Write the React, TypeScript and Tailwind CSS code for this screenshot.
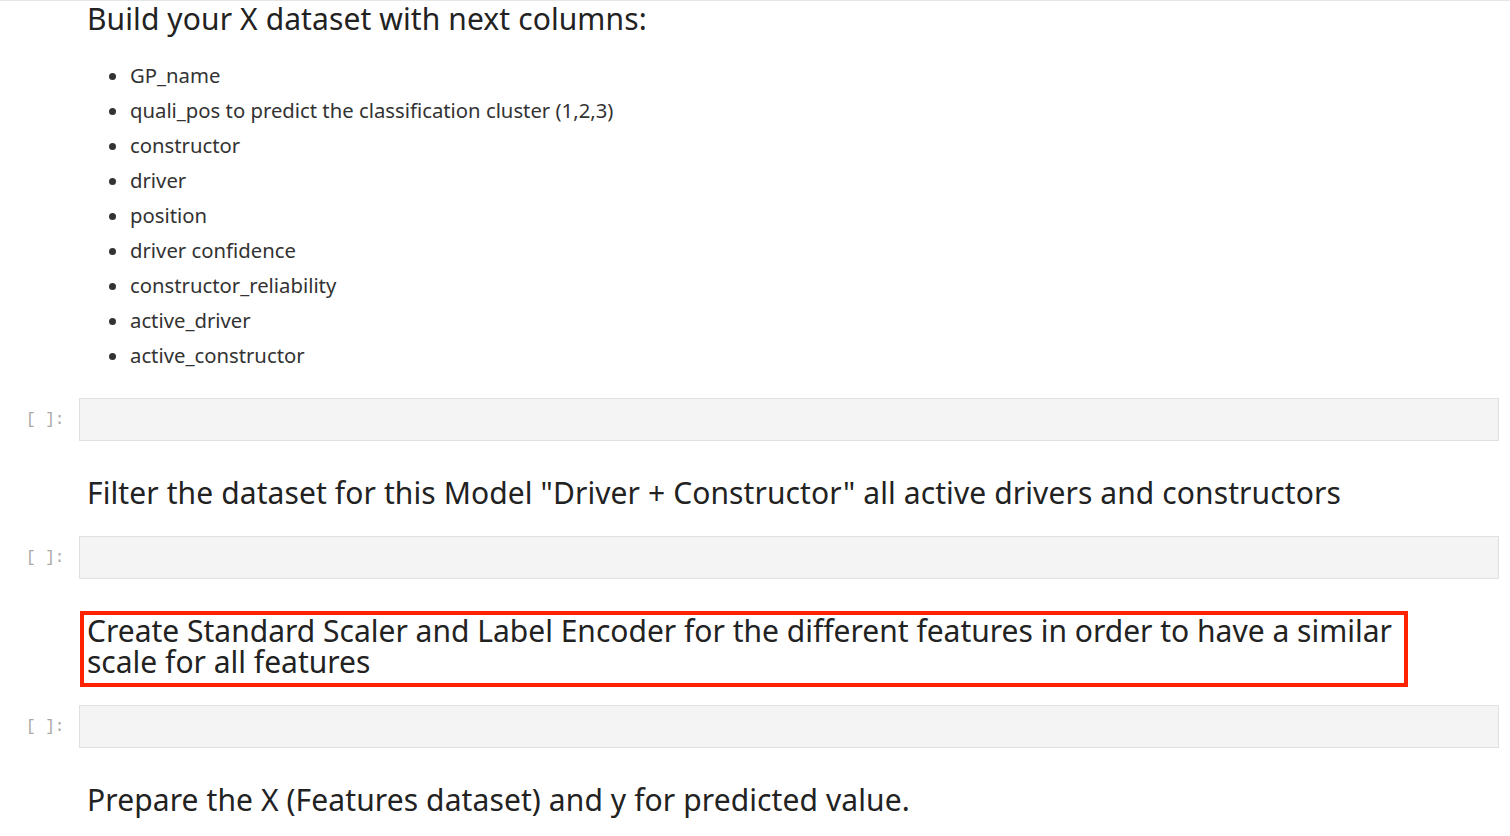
const items = [
  "GP_name",
  "quali_pos to predict the classification cluster (1,2,3)",
  "constructor",
  "driver",
  "position",
  "driver confidence",
  "constructor_reliability",
  "active_driver",
  "active_constructor",
];

const CodeCell = () => (
  <div className="flex items-center">
    <div className="w-[79px] shrink-0 pl-[26px] text-[16px] text-[#a8a8a8] font-['Liberation_Mono',monospace]">[ ]:</div>
    <div className="h-[43px] w-[1420px] border border-[#e0e0e0] bg-[#f4f4f4]" />
  </div>
);

export default function App() {
  return (
    <div className="min-h-[836px] w-[1510px] overflow-hidden bg-white border-t border-[#e6e6e6] font-['Noto_Sans',sans-serif] text-[#222]">
      <div className="pl-[87px]">
        <h2 className="text-[30px] leading-[36px] tracking-[0.1px]">Build your X dataset with next columns:</h2>
        <ul className="mt-[21px] pl-[43px] list-disc text-[20.3px] leading-[35px] text-[#333]">
          {items.map((t) => (
            <li key={t}>{t}</li>
          ))}
        </ul>
      </div>
      <div className="mt-[25px]">
        <CodeCell />
      </div>
      <div className="pl-[87px] mt-[34px] text-[30px] leading-[36px] tracking-[0.1px]">
        Filter the dataset for this Model "Driver + Constructor" all active drivers and constructors
      </div>
      <div className="mt-[25px]">
        <CodeCell />
      </div>
      <div className="ml-[80px] mt-[32px] w-[1328px] border-[4px] border-[#ff2200] pl-[3px] pr-0 pt-0 pb-[6px] text-[30px] leading-[31px] tracking-normal">
        Create Standard Scaler and Label Encoder for the different features in order to have a similar scale for all features
      </div>
      <div className="mt-[18px]">
        <CodeCell />
      </div>
      <div className="pl-[87px] mt-[34px] text-[30px] leading-[36px] tracking-[0.1px]">
        Prepare the X (Features dataset) and y for predicted value.
      </div>
    </div>
  );
}
